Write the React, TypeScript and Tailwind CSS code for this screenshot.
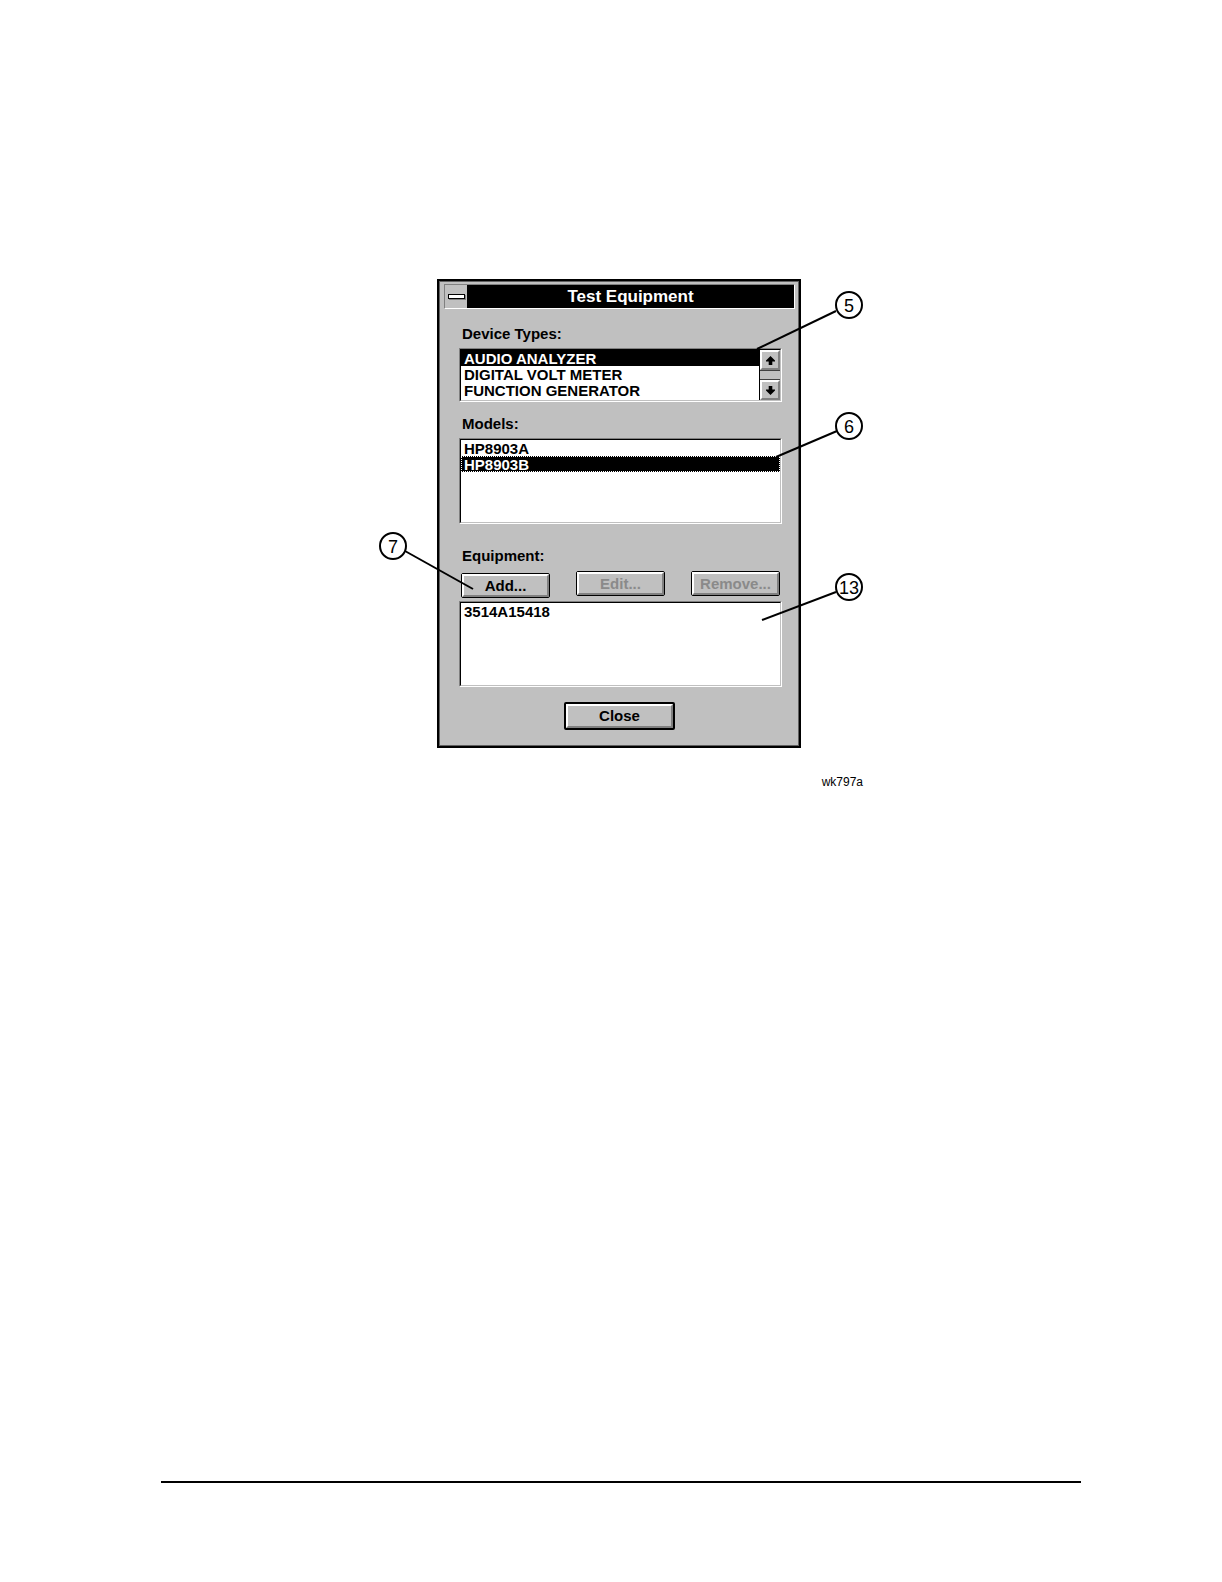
import { useState } from "react";
import clsx from "clsx";

const deviceTypes = ["AUDIO ANALYZER", "DIGITAL VOLT METER", "FUNCTION GENERATOR"];
const models = ["HP8903A", "HP8903B"];
const equipment = ["3514A15418"];

// leader lines run from the circle to the part they point at
const callouts = [
  { label: "5", cx: 470, cy: 26, x1: 457, y1: 32, x2: 378, y2: 70 },
  { label: "6", cx: 470, cy: 147, x1: 458, y1: 152, x2: 397, y2: 178 },
  { label: "7", cx: 14, cy: 267, x1: 26, y1: 272, x2: 94, y2: 310 },
  { label: "13", cx: 470, cy: 308, x1: 457, y1: 313, x2: 383, y2: 341 },
];

type ListBoxProps = {
  id: string;
  items: string[];
  initial?: string;
  focused?: boolean;
  scroll?: boolean;
  className: string;
};

function ScrollButton({ dir }: { dir: "up" | "down" }) {
  return (
    <button
      type="button"
      aria-label={`Scroll ${dir}`}
      className="flex h-5 w-full items-center justify-center border-2 border-t-white border-l-white border-r-[#808080] border-b-[#808080] bg-[#c0c0c0]"
    >
      <svg viewBox="0 0 9 9" className={clsx("size-[9px]", dir === "down" && "rotate-180")}>
        <path d="M4.5 0 9 4.5V5.5H6.3V9H2.7V5.5H0V4.5Z" fill="#000" />
      </svg>
    </button>
  );
}

function ListBox({ id, items, initial, focused, scroll, className }: ListBoxProps) {
  const [selected, setSelected] = useState(initial);

  return (
    <div
      className={clsx(
        "border border-t-[#808080] border-l-[#808080] border-r-white border-b-white",
        className
      )}
    >
      <div className="flex h-full border border-t-black border-l-black border-r-[#c0c0c0] border-b-[#c0c0c0] bg-white">
        <ul role="listbox" aria-labelledby={id} tabIndex={0} className="min-w-0 flex-1 outline-none">
          {items.map((item) => (
            <li
              key={item}
              role="option"
              aria-selected={item === selected}
              onClick={() => setSelected(item)}
              className={clsx(
                "h-4 cursor-default pl-[3px] leading-[18px] whitespace-nowrap",
                item === selected && "bg-black text-white",
                item === selected && focused && "outline-1 -outline-offset-1 outline-dotted outline-white"
              )}
            >
              {item}
            </li>
          ))}
        </ul>
        {scroll && (
          <div className="flex w-[21px] flex-col justify-between border-l border-black bg-[#c0c0c0]">
            <div className="border-b border-[#404040]">
              <ScrollButton dir="up" />
            </div>
            <div className="border-t border-[#404040]">
              <ScrollButton dir="down" />
            </div>
          </div>
        )}
      </div>
    </div>
  );
}

function PushButton({ label, disabled, className }: { label: string; disabled?: boolean; className?: string }) {
  return (
    <button
      type="button"
      disabled={disabled}
      className={clsx("h-[25px] w-[89px] rounded-xs border border-black bg-black", className)}
    >
      <span
        className={clsx(
          "flex h-full items-center justify-center border-2 border-t-white border-l-white border-r-[#808080] border-b-[#808080] bg-[#c0c0c0]",
          disabled && "text-[#8a8a8a]"
        )}
      >
        {label}
      </span>
    </button>
  );
}

function TestEquipmentDialog() {
  return (
    <section
      aria-labelledby="title"
      className="w-[364px] border-2 border-black bg-[#c0c0c0] pt-[3px] pb-4 text-[15px] leading-5 font-bold inset-shadow-[0_0_0_1px_#606060]"
    >
      <header className="mr-1 ml-[5px] flex h-[25px] border border-t-[#808080] border-l-[#808080] border-r-white border-b-white bg-black">
        <button
          type="button"
          aria-label="Control menu"
          className="flex w-[22px] items-center justify-center bg-[#c0c0c0]"
        >
          <span className="h-[5px] w-[17px] border border-black bg-white shadow-[1px_1px_0_#808080]" />
        </button>
        <h1 id="title" className="flex-1 text-center text-[17px] leading-6 text-white">
          Test Equipment
        </h1>
      </header>

      <div className="mt-[15px] mr-[17px] ml-5">
        <h2 id="types" className="mb-1 pl-[3px]">Device Types:</h2>
        <ListBox id="types" items={deviceTypes} initial="AUDIO ANALYZER" scroll className="h-[54px]" />

        <h2 id="models" className="mt-3 mb-1 pl-[3px]">Models:</h2>
        <ListBox id="models" items={models} initial="HP8903B" focused className="h-[86px]" />

        <h2 id="equipment" className="mt-[22px] mb-[5px] pl-[3px]">Equipment:</h2>
        <div className="mr-0.5 mb-[3px] ml-0.5 flex h-[27px] items-start justify-between">
          <PushButton label="Add..." className="self-end" />
          <PushButton label="Edit..." disabled />
          <PushButton label="Remove..." disabled />
        </div>
        <ListBox id="equipment" items={equipment} className="h-[86px]" />

        <div className="mt-[15px] flex justify-center pr-0.5">
          <button type="button" className="h-7 w-[111px] rounded-xs border-2 border-black bg-black">
            <span className="flex h-full items-center justify-center border-2 border-t-white border-l-white border-r-[#808080] border-b-[#808080] bg-[#c0c0c0]">
              Close
            </span>
          </button>
        </div>
      </div>
    </section>
  );
}

export default function App() {
  return (
    <main className="flex min-h-screen flex-col justify-between bg-white pt-[279px] pr-[141px] pb-[99px] pl-[161px] font-['Liberation_Sans',Arial,sans-serif] text-black">
      <figure className="relative mx-auto w-[484px]">
        <div className="pl-[58px]">
          <TestEquipmentDialog />
        </div>
        <svg viewBox="0 0 484 470" className="pointer-events-none absolute top-0 left-0 h-[470px] w-[484px]">
          {callouts.map((c) => (
            <g key={c.label}>
              <line x1={c.x1} y1={c.y1} x2={c.x2} y2={c.y2} stroke="#000" strokeWidth="2" />
              <circle cx={c.cx} cy={c.cy} r="13" fill="#fff" stroke="#000" strokeWidth="2" />
              <text x={c.cx} y={c.cy + 7} textAnchor="middle" fontSize="18">
                {c.label}
              </text>
            </g>
          ))}
        </svg>
        <figcaption className="mt-[26px] text-right text-xs">wk797a</figcaption>
      </figure>
      <hr className="border-t-2 border-black" />
    </main>
  );
}
